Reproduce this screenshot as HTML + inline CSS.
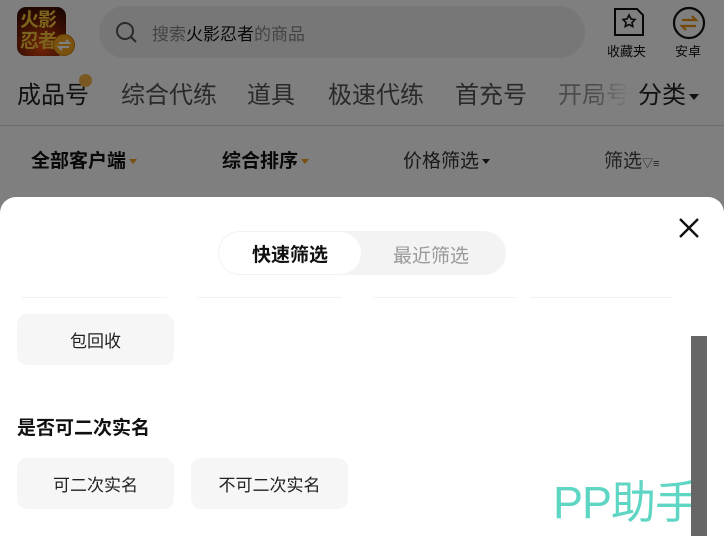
<!DOCTYPE html>
<html><head><meta charset="utf-8"><style>
*{margin:0;padding:0;box-sizing:border-box}
body{width:724px;height:536px;overflow:hidden;position:relative;background:#fff;font-family:"Liberation Sans","Noto Sans CJK SC",sans-serif;color:#111}
.abs{position:absolute}
.logo{left:17px;top:7px;width:49px;height:49px;border-radius:9px;background:radial-gradient(circle at 50% 80%,#e84a10,#6a1a05 60%,#2a0a02);}
.logo span{position:absolute;color:#f6c63c;font-weight:bold;font-size:19px;line-height:20px;left:3px;letter-spacing:-1px}
.badge{left:53px;top:34px;width:22px;height:22px;border-radius:50%;background:#f5a623;border:1px solid #c77a00}
.search{left:99px;top:6px;width:486px;height:52px;border-radius:26px;background:#efefef}
.nav{top:75px;font-size:24px;color:#222}
.sort{top:146px;font-size:19px}
.overlay{left:0;top:0;width:724px;height:536px;background:rgba(0,0,0,0.5)}
.sheet{left:0;top:197px;width:724px;height:360px;background:#fff;border-radius:16px 16px 0 0}
.chip{background:#f6f6f6;border-radius:10px;height:51px;font-size:17px;display:flex;align-items:center;justify-content:center;color:#222}
.tri{display:inline-block;width:0;height:0;border-left:4px solid transparent;border-right:4px solid transparent;border-top:5px solid #222;vertical-align:middle;margin-left:3px}
</style></head><body>
<div class="abs logo"><span style="top:4px">火影</span><span style="top:25px">忍者</span></div>
<div class="abs badge"><svg width="20" height="20" viewBox="0 0 20 20"><path d="M5 8h10l-3-3M15 12H5l3 3" stroke="#fff" stroke-width="2" fill="none"/></svg></div>
<div class="abs search"><svg class="abs" style="left:16px;top:15px" width="24" height="24" viewBox="0 0 24 24"><circle cx="10" cy="10" r="8" stroke="#555" stroke-width="2" fill="none"/><path d="M16 16l5 5" stroke="#555" stroke-width="2"/></svg><div class="abs" style="left:53px;top:14px;font-size:17px;color:#888">搜索<span style="color:#111">火影忍者</span>的商品</div></div>
<svg class="abs" style="left:612px;top:8px" width="34" height="28" viewBox="0 0 34 28"><path d="M3 1h22l6 6v20H3z" stroke="#111" stroke-width="2" fill="none"/><path d="M17 7l2 4 4 .5-3 3 .8 4-3.8-2-3.8 2 .8-4-3-3 4-.5z" stroke="#111" stroke-width="1.6" fill="none"/></svg>
<div class="abs" style="left:607px;top:41px;font-size:13px">收藏夹</div>
<svg class="abs" style="left:672px;top:6px" width="34" height="34" viewBox="0 0 34 34"><circle cx="17" cy="17" r="15" stroke="#111" stroke-width="2.2" fill="none"/><path d="M10 14h14l-4-4M24 20H10l4 4" stroke="#e8900c" stroke-width="2.2" fill="none"/></svg>
<div class="abs" style="left:675px;top:41px;font-size:13px">安卓</div>
<div class="abs nav" style="left:17px">成品号</div>
<div class="abs" style="left:79px;top:74px;width:13px;height:13px;border-radius:50%;background:#f5b043"></div>
<div class="abs nav" style="left:121px;color:#555">综合代练</div>
<div class="abs nav" style="left:247px;color:#555">道具</div>
<div class="abs nav" style="left:328px;color:#555">极速代练</div>
<div class="abs nav" style="left:455px;color:#555">首充号</div>
<div class="abs nav" style="left:558px;color:#999;width:72px;overflow:hidden;white-space:nowrap;-webkit-mask-image:linear-gradient(90deg,#000 50%,transparent)">开局号</div>
<div class="abs nav" style="left:638px">分类<span class="tri" style="border-top-width:6px;border-left-width:5px;border-right-width:5px"></span></div>
<div class="abs" style="left:0;top:125px;width:724px;height:1px;background:#ddd"></div>
<div class="abs sort" style="left:31px;font-weight:bold">全部客户端<span class="tri" style="border-top-color:#f0a020"></span></div>
<div class="abs sort" style="left:222px;font-weight:bold">综合排序<span class="tri" style="border-top-color:#f0a020"></span></div>
<div class="abs sort" style="left:403px;color:#333">价格筛选<span class="tri"></span></div>
<div class="abs sort" style="left:604px;color:#444">筛选<span style="font-size:11px">▽≡</span></div>
<div class="abs overlay"></div>
<div class="abs sheet"></div>
<div class="abs" style="left:218px;top:231px;width:288px;height:44px;border-radius:22px;background:#f3f3f3"></div>
<div class="abs" style="left:219px;top:232px;width:142px;height:42px;border-radius:21px;background:#fff;font-size:19px;font-weight:bold;display:flex;align-items:center;justify-content:center">快速筛选</div>
<div class="abs" style="left:393px;top:241px;font-size:19px;color:#999">最近筛选</div>
<svg class="abs" style="left:678px;top:217px" width="22" height="22" viewBox="0 0 22 22"><path d="M2 2l18 18M20 2L2 20" stroke="#111" stroke-width="2.4"/></svg>
<div class="abs" style="left:22px;top:297px;width:145px;height:1px;background:#f2f2f2"></div>
<div class="abs" style="left:197px;top:297px;width:145px;height:1px;background:#f2f2f2"></div>
<div class="abs" style="left:373px;top:297px;width:143px;height:1px;background:#f2f2f2"></div>
<div class="abs" style="left:530px;top:297px;width:143px;height:1px;background:#f2f2f2"></div>
<div class="abs chip" style="left:17px;top:314px;width:157px">包回收</div>
<div class="abs" style="left:17px;top:413px;font-size:19px;font-weight:bold">是否可二次实名</div>
<div class="abs chip" style="left:17px;top:458px;width:157px">可二次实名</div>
<div class="abs chip" style="left:191px;top:458px;width:157px">不可二次实名</div>
<div class="abs" style="left:553px;top:466px;font-size:45px;color:#5fd6c4;font-weight:normal;letter-spacing:-1px;width:138px;overflow:hidden;white-space:nowrap">PP助手</div>
<div class="abs" style="left:691px;top:336px;width:16px;height:200px;background:#666"></div>
</body></html>
